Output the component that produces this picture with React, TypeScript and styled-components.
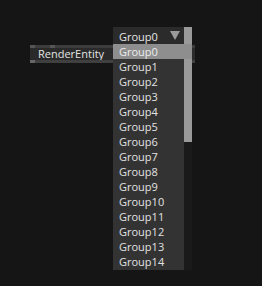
import React from 'react';
import styled, { createGlobalStyle } from 'styled-components';

const Global = createGlobalStyle`
  html, body {
    margin: 0;
    padding: 0;
    background: #151515;
  }
  body {
    font-family: 'Open Sans', 'Noto Sans', sans-serif;
  }
`;

const groups = Array.from({ length: 15 }, (_, i) => `Group${i}`);

function App() {
  return (
    <Page>
      <Global />
      <EntityBar>
        <Strip>
          <Notch />
          <Gap $w={15} />
          <Notch />
        </Strip>
        <BarBody>RenderEntity</BarBody>
        <Strip $bottom>
          <Notch $bottom />
        </Strip>
      </EntityBar>

      <Dropdown>
        <Column>
          <Header>
            <span>Group0</span>
            <Arrow />
          </Header>
          <List>
            {groups.map((g, i) => (
              <Item key={g} $active={i === 0}>
                {g}
              </Item>
            ))}
          </List>
        </Column>
        <Track>
          <Thumb />
        </Track>
      </Dropdown>
    </Page>
  );
}

export default App;

const Page = styled.div`
  position: relative;
  width: 262px;
  height: 286px;
  padding: 45px 0 0 30px;
  box-sizing: border-box;
  background: #151515;
`;

const EntityBar = styled.div`
  display: flex;
  flex-direction: column;
  width: 165px;
`;

const Strip = styled.div<{ $bottom?: boolean }>`
  display: flex;
  height: 3px;
  background: ${(p) => (p.$bottom ? '#404040' : '#3c3c3c')};
`;

const Notch = styled.div<{ $bottom?: boolean }>`
  width: 5px;
  height: 100%;
  background: ${(p) => (p.$bottom ? '#666666' : '#555555')};
`;

const Gap = styled.div<{ $w: number }>`
  width: ${(p) => p.$w}px;
`;

const BarBody = styled.div`
  height: 12px;
  line-height: 12px;
  padding-left: 8px;
  background: #2a2a2a;
  color: #e4e4e4;
  font-size: 11px;
`;

const Dropdown = styled.div`
  position: absolute;
  left: 113px;
  top: 27px;
  display: flex;
  height: 243px;
`;

const Column = styled.div`
  display: flex;
  flex-direction: column;
  width: 71px;
  background: #333333;
`;

const Header = styled.div`
  display: flex;
  align-items: center;
  justify-content: space-between;
  height: 17px;
  padding: 1px 4px 0 6px;
  box-sizing: border-box;
  background: #2b2b2b;
  color: #e6e6e6;
  font-size: 11px;
`;

const Arrow = styled.div`
  width: 0;
  height: 0;
  margin-top: -2px;
  border-left: 5px solid transparent;
  border-right: 5px solid transparent;
  border-top: 9px solid #9a9a9a;
`;

const List = styled.div`
  display: flex;
  flex-direction: column;
`;

const Item = styled.div<{ $active?: boolean }>`
  height: 15px;
  line-height: 15px;
  padding-left: 6px;
  margin-right: ${(p) => (p.$active ? '-8px' : '0')};
  position: relative;
  font-size: 11px;
  color: ${(p) => (p.$active ? '#ececec' : '#e2e2e2')};
  background: ${(p) => (p.$active ? '#8e8e8e' : 'transparent')};
`;

const Track = styled.div`
  width: 8px;
  background: #1a1a1a;
`;

const Thumb = styled.div`
  height: 115px;
  background: #9a9a9a;
`;
